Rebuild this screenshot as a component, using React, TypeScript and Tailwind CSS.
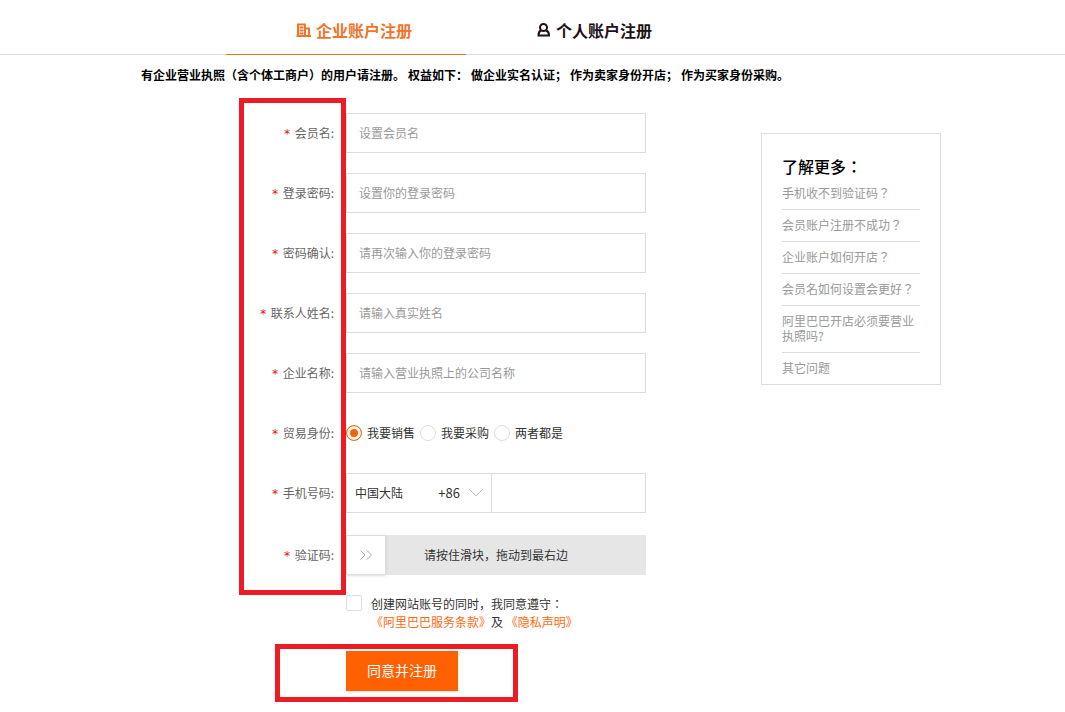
import { useState } from 'react'
import type { ReactNode } from 'react'

const notices = [
  '有企业营业执照（含个体工商户）的用户请注册。',
  '权益如下：',
  '做企业实名认证；',
  '作为卖家身份开店；',
  '作为买家身份采购。',
]

const textFields = [
  { id: 'member', label: '会员名:', placeholder: '设置会员名', type: 'text' },
  { id: 'password', label: '登录密码:', placeholder: '设置你的登录密码', type: 'password' },
  { id: 'confirm', label: '密码确认:', placeholder: '请再次输入你的登录密码', type: 'password' },
  { id: 'contact', label: '联系人姓名:', placeholder: '请输入真实姓名', type: 'text' },
  { id: 'company', label: '企业名称:', placeholder: '请输入营业执照上的公司名称', type: 'text' },
]

const roles = ['我要销售', '我要采购', '两者都是']

const questions = [
  '手机收不到验证码？',
  '会员账户注册不成功？',
  '企业账户如何开店？',
  '会员名如何设置会更好？',
  '阿里巴巴开店必须要营业执照吗?',
  '其它问题',
]

function CompanyIcon() {
  return (
    <svg width="16" height="16" viewBox="0 0 16 16" fill="none" stroke="currentColor" strokeWidth="2">
      <path d="M2 14V2.500h7V14M9.500 6.500H13V14M0.500 14h14.500" />
      <path d="M3.500 5.500h4M3.500 8.500h4M3.500 11.500h4" strokeWidth="2" />
    </svg>
  )
}

function PersonIcon() {
  return (
    <svg width="16" height="16" viewBox="0 0 16 16" fill="none" stroke="currentColor" strokeWidth="2">
      <circle cx="7.500" cy="5.500" r="3.500" />
      <path d="M5 8.500C3 9.300 2.500 10.700 2.500 13.500h10.500c0-2.800-.6-4.200-2.800-5" />
    </svg>
  )
}

interface RowProps {
  label: string
  htmlFor: string
  tall?: boolean
  children: ReactNode
}

function Row({ label, htmlFor, tall = false, children }: RowProps) {
  return (
    <div className={`flex items-center gap-3 ${tall ? 'h-11' : 'h-10'}`}>
      <label htmlFor={htmlFor} id={htmlFor + '-label'} className="w-[95px] shrink-0 text-right text-[#666]">
        <span className="mr-1 font-['DejaVu_Sans_Mono',monospace] leading-none text-[#e01010]">*</span>
        {label}
      </label>
      {children}
    </div>
  )
}

export default function App() {
  const [role, setRole] = useState(roles[0])

  return (
    <div className="min-h-screen bg-white font-['Noto_Sans_CJK_SC',sans-serif] text-xs text-[#333]">
      <nav className="flex h-[55px] border-b border-[#ddd] pl-[226px] text-base font-bold">
        <a href="#company" className="-mb-px flex w-60 items-center justify-center gap-1 border-b border-[#e8702a] pt-1.5 pl-4 text-[#f0742a]">
          <CompanyIcon />
          企业账户注册
        </a>
        <a href="#person" className="flex w-60 items-center justify-center gap-1 pt-1.5 pl-4 text-[#201018]">
          <PersonIcon />
          个人账户注册
        </a>
      </nav>

      <p className="flex flex-wrap gap-x-[3px] pt-3 pl-[141px] leading-4 font-bold text-black">
        {notices.map((text) => (
          <span key={text}>{text}</span>
        ))}
      </p>

      <main className="flex items-start pt-[15px] pl-[239px]">
        <form className="w-[407px] shrink-0" onSubmit={(e) => e.preventDefault()}>
          <div className="relative flex flex-col gap-5 pt-[15px] pb-[18px]">
            {textFields.map((field) => (
              <Row key={field.id} label={field.label} htmlFor={field.id}>
                <input
                  id={field.id}
                  type={field.type}
                  placeholder={field.placeholder}
                  className="h-10 min-w-0 flex-1 border border-[#ddd] px-3 pb-0.5 outline-none placeholder:text-[#999]"
                />
              </Row>
            ))}

            <Row label="贸易身份:" htmlFor="role">
              <div role="radiogroup" aria-labelledby="role-label" className="flex gap-[5px]">
                {roles.map((name, i) => (
                  <label key={name} className="flex items-center gap-[5px]">
                    <input
                      id={i === 0 ? 'role' : undefined}
                      type="radio"
                      name="role"
                      checked={role === name}
                      onChange={() => setRole(name)}
                      className="size-4 appearance-none rounded-full border border-[#ddd] bg-white checked:border-[#ff7300] checked:bg-[#ff6000] checked:shadow-[inset_0_0_0_3px_white]"
                    />
                    {name}
                  </label>
                ))}
              </div>
            </Row>

            <Row label="手机号码:" htmlFor="phone">
              <div className="flex h-10 min-w-0 flex-1">
                <div className="relative w-[146px] shrink-0">
                  <select aria-label="国家/地区" className="h-full w-full appearance-none border border-[#ddd] bg-white px-2 outline-none">
                    <option>中国大陆</option>
                  </select>
                  <span className="pointer-events-none absolute inset-y-0 right-2 flex items-center gap-2 text-[13px]">
                    +86
                    <svg width="16" height="10" viewBox="0 0 16 10" fill="none" stroke="#bbb">
                      <path d="M1 1l7 7 7-7" />
                    </svg>
                  </span>
                </div>
                <input id="phone" type="tel" className="h-10 min-w-0 flex-1 border border-l-0 border-[#ddd] px-3 outline-none" />
              </div>
            </Row>

            <Row label="验证码:" htmlFor="captcha" tall>
              <div className="relative h-10 flex-1">
                <input
                  id="captcha"
                  type="range"
                  defaultValue={0}
                  className="block h-10 w-full appearance-none bg-[#e6e6e6] outline-none [&::-webkit-slider-thumb]:h-10 [&::-webkit-slider-thumb]:w-10 [&::-webkit-slider-thumb]:appearance-none [&::-webkit-slider-thumb]:border [&::-webkit-slider-thumb]:border-[#ddd] [&::-webkit-slider-thumb]:bg-white [&::-webkit-slider-thumb]:shadow-sm"
                />
                <div className="pointer-events-none absolute inset-0 flex items-center">
                  <span className="flex w-10 justify-center">
                    <svg width="14" height="12" viewBox="0 0 14 12" fill="none" stroke="#aaa">
                      <path d="M1.500 1.500L6 6l-4.500 4.500M8 1.500L12.500 6 8 10.500" />
                    </svg>
                  </span>
                  <span className="pl-[38px]">请按住滑块，拖动到最右边</span>
                </div>
              </div>
            </Row>

            {/* highlight over the label column */}
            <div className="pointer-events-none absolute inset-y-0 left-0 w-[107px] border-5 border-[#ed1c24]" />
          </div>

          <div className="flex gap-[9px] pl-[107px]">
            <input
              id="agree"
              type="checkbox"
              className="size-4 shrink-0 appearance-none rounded-xs border border-[#ddd] bg-white checked:bg-[#ff6000]"
            />
            <div className="leading-[18px]">
              <label htmlFor="agree" className="block">
                创建网站账号的同时，我同意遵守<span className="font-['Noto_Sans_CJK_TC',sans-serif]">：</span>
              </label>
              <a href="#terms" className="text-[#ff6a10]">《阿里巴巴服务条款》</a>
              及{' '}
              <a href="#privacy" className="text-[#ff6a10]">《隐私声明》</a>
            </div>
          </div>

          <div className="mt-[13px] ml-9 flex w-[243px] border-5 border-[#ed1c24] pt-[2px] pb-[6px] pl-[66px]">
            <button type="submit" className="h-10 w-28 bg-[#ff6000] pb-0.5 text-sm text-white shadow-sm">
              同意并注册
            </button>
          </div>
        </form>

        <aside className="mt-[35px] ml-[115px] w-[180px] border border-[#ddd] px-5 pt-5 font-['Noto_Sans_CJK_TC',sans-serif]">
          <h2 className="text-base leading-6 font-medium text-black">了解更多：</h2>
          <ul className="divide-y divide-[#ddd] leading-[15px] text-[#999]">
            {questions.map((question) => (
              <li key={question} className="pt-[7px] pb-[9px]">
                <a href="#help">{question}</a>
              </li>
            ))}
          </ul>
        </aside>
      </main>
    </div>
  )
}
